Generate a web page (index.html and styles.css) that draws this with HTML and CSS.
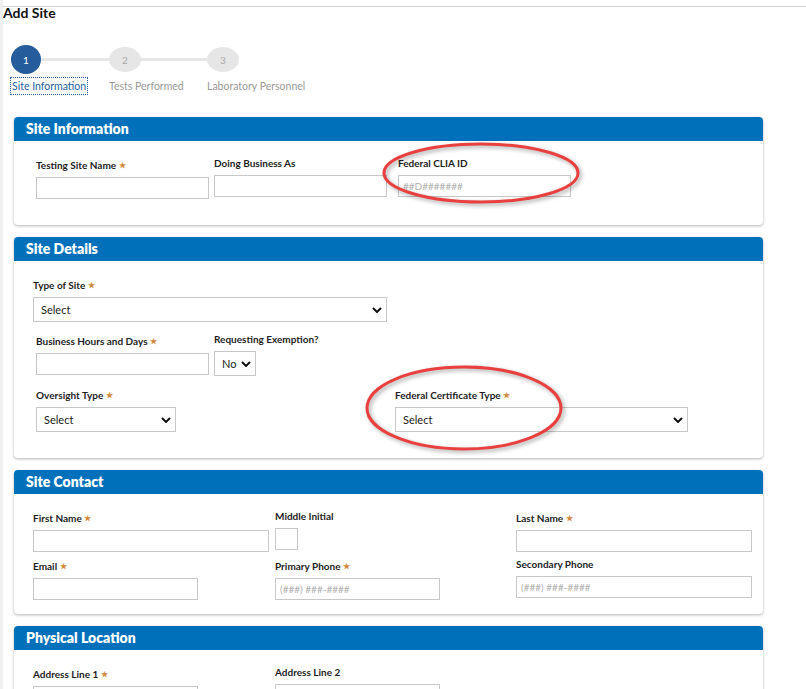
FILE: index.html
```html
<!DOCTYPE html>
<html lang="en">

<head>
    <meta charset="UTF-8">
    <meta name="viewport" content="width=device-width, initial-scale=1.0">
    <title>Add Site</title>
    <link rel="stylesheet" href="styles.css">
</head>

<body>
    <div class="page">
        <h1 class="page_title">Add Site</h1>

        <!-- steps -->
        <div class="steps">
            <div class="step step_active">
                <div class="step_top"><span class="step_num">1</span><span class="step_line"></span></div>
                <span class="step_label">Site Information</span>
            </div>
            <div class="step">
                <div class="step_top"><span class="step_num">2</span><span class="step_line"></span></div>
                <span class="step_label">Tests Performed</span>
            </div>
            <div class="step">
                <div class="step_top"><span class="step_num">3</span></div>
                <span class="step_label">Laboratory Personnel</span>
            </div>
        </div>

        <!-- Site Information -->
        <div class="card">
            <div class="card_head">Site Information</div>
            <div class="card_body">
                <div class="row row_info">
                    <div class="field req">
                        <label>Testing Site Name <span class="star">★</span></label>
                        <input class="input w173" type="text">
                    </div>
                    <div class="field">
                        <label>Doing Business As</label>
                        <input class="input w173" type="text">
                    </div>
                    <div class="field">
                        <label>Federal CLIA ID</label>
                        <input class="input w173" type="text" placeholder="##D#######">
                    </div>
                </div>
            </div>
        </div>

        <!-- Site Details -->
        <div class="card">
            <div class="card_head">Site Details</div>
            <div class="card_body">
                <div class="row row_type">
                    <div class="field req">
                        <label>Type of Site <span class="star">★</span></label>
                        <div class="select_box w354">
                            <select class="select"><option>Select</option></select>
                            <svg class="chevron" viewBox="0 0 10 6"><polyline points="1,1 5,5 9,1"/></svg>
                        </div>
                    </div>
                </div>
                <div class="row row_hours gap11">
                    <div class="field req">
                        <label>Business Hours and Days <span class="star">★</span></label>
                        <input class="input w173" type="text">
                    </div>
                    <div class="field">
                        <label>Requesting Exemption?</label>
                        <div class="select_box w42">
                            <select class="select"><option>No</option></select>
                            <svg class="chevron" viewBox="0 0 10 6"><polyline points="1,1 5,5 9,1"/></svg>
                        </div>
                    </div>
                </div>
                <div class="row row_oversight gap11">
                    <div class="field req">
                        <label>Oversight Type <span class="star">★</span></label>
                        <div class="select_box w140">
                            <select class="select"><option>Select</option></select>
                            <svg class="chevron" viewBox="0 0 10 6"><polyline points="1,1 5,5 9,1"/></svg>
                        </div>
                    </div>
                    <div class="field req">
                        <label>Federal Certificate Type <span class="star">★</span></label>
                        <div class="select_box w293">
                            <select class="select"><option>Select</option></select>
                            <svg class="chevron" viewBox="0 0 10 6"><polyline points="1,1 5,5 9,1"/></svg>
                        </div>
                    </div>
                </div>
            </div>
        </div>

        <!-- Site Contact -->
        <div class="card">
            <div class="card_head">Site Contact</div>
            <div class="card_body body_tight">
                <div class="row row_three">
                    <div class="field req">
                        <label>First Name <span class="star">★</span></label>
                        <input class="input w236" type="text">
                    </div>
                    <div class="field">
                        <label>Middle Initial</label>
                        <input class="input w23" type="text">
                    </div>
                    <div class="field req">
                        <label>Last Name <span class="star">★</span></label>
                        <input class="input w236" type="text">
                    </div>
                </div>
                <div class="row row_three gap6">
                    <div class="field req">
                        <label>Email <span class="star">★</span></label>
                        <input class="input w165" type="text">
                    </div>
                    <div class="field req">
                        <label>Primary Phone <span class="star">★</span></label>
                        <input class="input w165" type="text" placeholder="(###) ###-####">
                    </div>
                    <div class="field">
                        <label>Secondary Phone</label>
                        <input class="input w236" type="text" placeholder="(###) ###-####">
                    </div>
                </div>
            </div>
        </div>

        <!-- Physical Location -->
        <div class="card">
            <div class="card_head">Physical Location</div>
            <div class="card_body">
                <div class="row row_three">
                    <div class="field req">
                        <label>Address Line 1 <span class="star">★</span></label>
                        <input class="input w165" type="text">
                    </div>
                    <div class="field">
                        <label>Address Line 2</label>
                        <input class="input w165" type="text">
                    </div>
                </div>
            </div>
        </div>

        <!-- red marks drawn over the screenshot -->
        <svg class="marks" width="806" height="689" viewBox="0 0 806 689">
            <ellipse cx="481" cy="173" rx="97" ry="29" />
            <ellipse cx="464" cy="408" rx="97" ry="41" />
        </svg>
    </div>
</body>

</html>
```
FILE: styles.css
```css
* {
    margin: 0;
    padding: 0;
    box-sizing: border-box;
}

body {
    font-family: Lato, "Open Sans", sans-serif;
    color: #222;
    background: #fff;
    overflow: hidden;
}

.page {
    position: relative;
    height: 689px;
    padding-top: 6px;
    border-left: 3px solid #f0f0f0;
    overflow: hidden;
}

.page_title {
    border-top: 1px solid #d2d2d2;
    font-size: 14px;
    line-height: 12px;
    font-weight: 700;
    color: #111;
}

/* steps */
.steps {
    display: flex;
    margin: 26px 0 0 8px;
}

.step {
    width: 98px;
    display: flex;
    flex-direction: column;
    align-items: flex-start;
}

.step_top {
    width: 100%;
    height: 29px;
    display: flex;
    align-items: center;
}

.step_num {
    flex-shrink: 0;
    width: 32px;
    height: 25px;
    border-radius: 50%;
    background: #e6e6e6;
    color: #aaa;
    font-size: 10px;
    display: flex;
    align-items: center;
    justify-content: center;
}

.step_line {
    flex: 1;
    height: 3px;
    background: #e6e6e6;
}

.step_label {
    margin-top: 4px;
    padding: 1px 1px 1px 0;
    font-size: 10.5px;
    line-height: 14px;
    color: #9a9a9a;
    white-space: nowrap;
}

.step_active .step_num {
    width: 30px;
    height: 29px;
    background: #245c9c;
    color: #fff;
}

.step_active .step_label {
    color: #2a5f9e;
    outline: 1px dotted #2a5f9e;
    padding-left: 1px;
}

/* cards */
.card {
    width: 749px;
    margin: 23px 0 0 11px;
    background: #fff;
    border-radius: 4px;
    box-shadow: 0 1px 3px rgba(0, 0, 0, 0.3);
    overflow: hidden;
}

.card+.card {
    margin-top: 12px;
}

.card_head {
    height: 24px;
    line-height: 24px;
    padding-left: 12px;
    background: #0070bb;
    color: #fff;
    font-size: 14px;
    font-weight: 800;
}

.card_body {
    padding: 16px 0 26px;
}

.body_tight {
    padding-bottom: 14px;
}

.row {
    display: grid;
    align-items: start;
}

.gap11 {
    margin-top: 11px;
}

.gap6 {
    margin-top: 6px;
}

.row_info {
    padding-left: 22px;
    grid-template-columns: 178px 184px 173px;
}

.row_type {
    padding-left: 19px;
    grid-template-columns: 354px;
}

.row_hours {
    padding-left: 22px;
    grid-template-columns: 178px 42px;
}

.row_oversight {
    padding-left: 22px;
    grid-template-columns: 359px 293px;
}

.row_three {
    padding-left: 19px;
    grid-template-columns: 242px 241px 236px;
}

.field>label {
    display: block;
    margin-bottom: 6px;
    font-size: 10px;
    line-height: 12px;
    font-weight: 700;
    color: #1e1e1e;
    white-space: nowrap;
}

.field.req>label {
    padding-top: 2px;
}

.star {
    color: #d38a3f;
    font-size: 8px;
    vertical-align: 1px;
}

.input {
    display: block;
    height: 22px;
    border: 1px solid #c8c8c8;
    padding: 0 4px;
    font-family: Lato, "Open Sans", sans-serif;
    font-size: 10px;
    color: #333;
    background: #fff;
}

.input::placeholder {
    color: #b0b0b0;
}

.select_box {
    position: relative;
    height: 25px;
}

.select {
    appearance: none;
    -webkit-appearance: none;
    display: block;
    width: 100%;
    height: 25px;
    border: 1px solid #c8c8c8;
    border-radius: 0;
    padding-left: 7px;
    background: #fff;
    font-family: Lato, "Open Sans", sans-serif;
    font-size: 11px;
    color: #222;
}

.chevron {
    position: absolute;
    right: 5px;
    top: 10px;
    width: 10px;
    height: 6px;
    fill: none;
    stroke: #111;
    stroke-width: 2;
}

.w23 { width: 23px; }
.w42 { width: 42px; }
.w140 { width: 140px; }
.w165 { width: 165px; }
.w173 { width: 173px; }
.w236 { width: 236px; }
.w293 { width: 293px; }
.w354 { width: 354px; }

/* annotation overlay */
.marks {
    position: absolute;
    left: -3px;
    top: 0;
    pointer-events: none;
}

.marks ellipse {
    fill: none;
    stroke: #e8403f;
    stroke-width: 3;
    filter: drop-shadow(2px 2px 2px rgba(0, 0, 0, 0.35));
}
```
